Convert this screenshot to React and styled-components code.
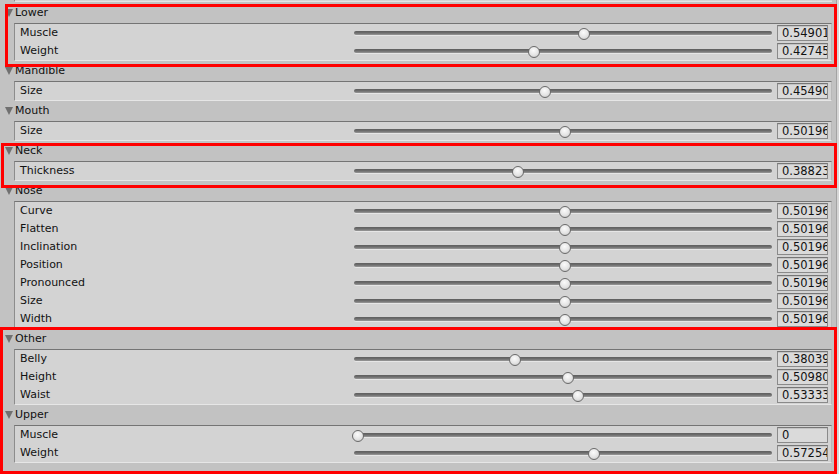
import React from "react";
import styled, { createGlobalStyle } from "styled-components";

const GlobalStyle = createGlobalStyle`
  html, body {
    margin: 0;
    padding: 0;
    background: #c2c2c2;
  }
  body {
    font-family: "DejaVu Sans", Verdana, sans-serif;
    font-size: 11px;
    color: #111;
  }
`;

const groups = [
  { name: "Lower", rows: [["Muscle", "0.5490196"], ["Weight", "0.4274510"]] },
  { name: "Mandible", rows: [["Size", "0.4549020"]] },
  { name: "Mouth", rows: [["Size", "0.5019608"]] },
  { name: "Neck", rows: [["Thickness", "0.3882353"]] },
  {
    name: "Nose",
    rows: [
      ["Curve", "0.5019608"],
      ["Flatten", "0.5019608"],
      ["Inclination", "0.5019608"],
      ["Position", "0.5019608"],
      ["Pronounced", "0.5019608"],
      ["Size", "0.5019608"],
      ["Width", "0.5019608"],
    ],
  },
  {
    name: "Other",
    rows: [
      ["Belly", "0.3803922"],
      ["Height", "0.5098039"],
      ["Waist", "0.5333334"],
    ],
  },
  { name: "Upper", rows: [["Muscle", "0"], ["Weight", "0.5725490"]] },
];

// red annotation frames drawn over the inspector
const marks = [
  { left: 5, top: 4, width: 832, height: 63 },
  { left: 1, top: 143, width: 836, height: 45 },
  { left: 0, top: 327, width: 837, height: 147 },
];

const Window = styled.div`
  position: relative;
  width: 839px;
  height: 474px;
  overflow: hidden;
  display: flex;
  background: #c2c2c2;
`;

const Inspector = styled.div`
  width: 836px;
  display: flex;
  flex-direction: column;
`;

const ScrollEdge = styled.div`
  width: 2px;
  border-left: 1px solid #a3a3a3;
  background: #d6d6d6;
`;

const PrevTail = styled.div`
  height: 1px;
  margin: 0 4px 1px 14px;
  background: #d3d3d3;
  border-bottom: 1px solid #e4e4e4;
  border-left: 1px solid #8c8c8c;
`;

const Header = styled.div`
  height: 20px;
  display: flex;
  align-items: center;
  padding-left: 5px;
  gap: 2px;
`;

const Arrow = styled.span`
  width: 0;
  height: 0;
  border-left: 4.5px solid transparent;
  border-right: 4.5px solid transparent;
  border-top: 8px solid #707070;
`;

const Title = styled.span`
  line-height: 20px;
`;

const Box = styled.div`
  margin: 0 4px 0 14px;
  padding: 0 3px 0 5px;
  background: #d3d3d3;
  border-top: 1px solid #747474;
  border-left: 1px solid #8c8c8c;
  border-bottom: 1px solid #e6e6e6;
  border-right: 1px solid #b8b8b8;
`;

const Row = styled.div`
  height: 18px;
  display: grid;
  grid-template-columns: 329px 418px 51px;
  column-gap: 5px;
  align-items: center;
`;

const Label = styled.span`
  line-height: 18px;
  white-space: nowrap;
`;

const Slider = styled.div`
  position: relative;
  height: 18px;
  display: flex;
  align-items: center;
`;

const Track = styled.div`
  width: 100%;
  height: 4px;
  border-radius: 2px;
  background: linear-gradient(#5e5e5e, #6e6e6e 50%, #9a9a9a);
  box-shadow: 0 1px 0 #e6e6e6;
`;

const Thumb = styled.div`
  position: absolute;
  top: 4px;
  width: 10px;
  height: 10px;
  border-radius: 50%;
  border: 1px solid #6a6a6a;
  background: radial-gradient(circle at 45% 35%, #fbfbfb, #e4e4e4 55%, #bdbdbd);
`;

const Field = styled.div`
  height: 14px;
  box-sizing: content-box;
  border: 1px solid #8a8a8a;
  border-top-color: #767676;
  background: #dadada;
  box-shadow: inset 0 1px 0 #c4c4c4;
  padding-left: 4px;
  overflow: hidden;
  white-space: nowrap;
  font-size: 11.5px;
  line-height: 14px;
`;

const Mark = styled.div`
  position: absolute;
  box-sizing: border-box;
  border: 3px solid #ff0000;
  pointer-events: none;
`;

function SliderRow({ label, value }) {
  const v = parseFloat(value);
  const center = 4 + v * 412;
  return (
    <Row>
      <Label>{label}</Label>
      <Slider>
        <Track />
        <Thumb style={{ left: `${center - 6}px` }} />
      </Slider>
      <Field>{value}</Field>
    </Row>
  );
}

function Group({ name, rows }) {
  return (
    <>
      <Header>
        <Arrow />
        <Title>{name}</Title>
      </Header>
      <Box>
        {rows.map(([label, value], i) => (
          <SliderRow key={i} label={label} value={value} />
        ))}
      </Box>
    </>
  );
}

export default function App() {
  return (
    <>
      <GlobalStyle />
      <Window>
        <Inspector>
          <PrevTail />
          {groups.map((g) => (
            <Group key={g.name} name={g.name} rows={g.rows} />
          ))}
        </Inspector>
        <ScrollEdge />
        {marks.map((m, i) => (
          <Mark
            key={i}
            style={{ left: m.left, top: m.top, width: m.width, height: m.height }}
          />
        ))}
      </Window>
    </>
  );
}
